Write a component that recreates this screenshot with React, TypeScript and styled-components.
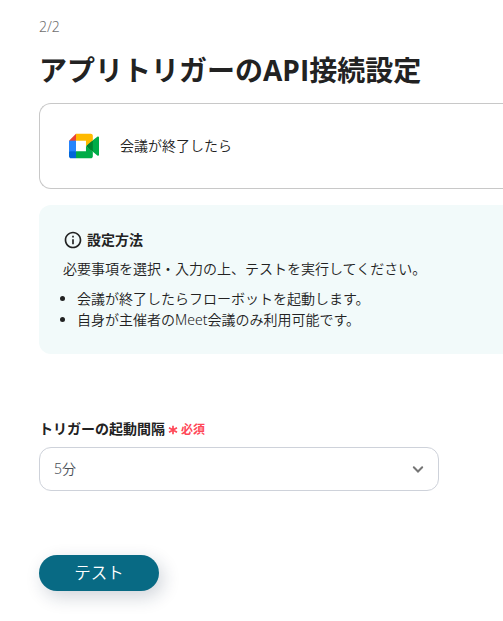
import { FC } from "react";

import styled, { createGlobalStyle } from "styled-components";

const notes = [
  "会議が終了したらフローボットを起動します。",
  "自身が主催者のMeet会議のみ利用可能です。",
];

const MeetLogo: FC = () => (
  <svg width="30" height="26" viewBox="0 0 87.5 72" aria-hidden="true">
    <path
      fill="#00832d"
      d="M49.5 36l8.53 9.75 11.47 7.33 2-17.02-2-16.64-11.69 6.44z"
    />
    <path
      fill="#0066da"
      d="M0 51.5V66c0 3.315 2.685 6 6 6h14.5l3-10.96-3-9.54-9.95-3z"
    />
    <path fill="#e94235" d="M20.5 0L0 20.5l10.55 3 9.95-3 2.95-9.41z" />
    <path fill="#2684fc" d="M20.5 20.5H0v31h20.5z" />
    <path
      fill="#00ac47"
      d="M82.6 8.68L69.5 19.42v33.66l13.16 10.79c1.97 1.54 4.85.135 4.85-2.37V11c0-2.535-2.945-3.925-4.91-2.32zM49.5 36v15.5h-29V72h43c3.315 0 6-2.685 6-6V53.08z"
    />
    <path
      fill="#ffba00"
      d="M63.5 0h-43v20.5h29V36l20-16.57V6c0-3.315-2.685-6-6-6z"
    />
  </svg>
);

const InfoIcon: FC = () => (
  <svg width="20" height="20" viewBox="0 0 24 24" aria-hidden="true">
    <path
      fill="#222222"
      d="M11 7h2v2h-2zm0 4h2v6h-2zm1-9C6.48 2 2 6.48 2 12s4.48 10 10 10 10-4.48 10-10S17.52 2 12 2zm0 18c-4.41 0-8-3.59-8-8s3.59-8 8-8 8 3.59 8 8-3.59 8-8 8z"
    />
  </svg>
);

const Asterisk: FC = () => (
  <svg width="10" height="10" viewBox="0 0 10 10" aria-hidden="true">
    <path
      stroke="#ff4757"
      strokeWidth="1.7"
      d="M5 .7v8.6M1 2.75l8 4.5M9 2.75l-8 4.5"
    />
  </svg>
);

const Chevron: FC = () => (
  <svg width="12" height="8" viewBox="0 0 12 8" aria-hidden="true">
    <path
      fill="none"
      stroke="#757575"
      strokeWidth="2"
      strokeLinecap="round"
      d="M1.8 2.3L6 6.5l4.2-4.2"
    />
  </svg>
);

const App: FC = () => {
  return (
    <>
      <GlobalStyle />
      <Page>
        <Step>2/2</Step>
        <Heading>アプリトリガーのAPI接続設定</Heading>

        <TriggerCard>
          <MeetLogo />
          <TriggerName>会議が終了したら</TriggerName>
        </TriggerCard>

        <Guide>
          <GuideTitle>
            <InfoIcon />
            設定方法
          </GuideTitle>
          <GuideText>
            必要事項を選択・入力の上、テストを実行してください。
          </GuideText>
          <GuideList>
            {notes.map((note) => (
              <li key={note}>{note}</li>
            ))}
          </GuideList>
        </Guide>

        <FieldLabel>
          トリガーの起動間隔
          <Required>
            <Asterisk />
            必須
          </Required>
        </FieldLabel>
        <Select type="button">
          <SelectValue>5分</SelectValue>
          <Chevron />
        </Select>

        <TestButton type="button">テスト</TestButton>
      </Page>
    </>
  );
};

const GlobalStyle = createGlobalStyle`
  * {
    box-sizing: border-box;
  }

  body {
    margin: 0;

    background: #ffffff;
    color: #222222;
    font-family: "Noto Sans", "Noto Sans CJK JP", sans-serif;
    font-size: 14px;
    font-weight: 350;
  }

  button {
    font-family: inherit;
    font-weight: inherit;
  }
`;

const Page = styled.main`
  min-height: 621px;
  padding: 17px 0 0 39px;
`;

const Step = styled.p`
  margin: 0;

  color: #707070;
  font-size: 14px;
  line-height: 20px;
`;

const Heading = styled.h1`
  margin: 13px 0 0;

  font-family: "Open Sans", "Noto Sans CJK JP", sans-serif;
  font-size: 28px;
  font-weight: 700;
  line-height: 40px;
  white-space: nowrap;
`;

const TriggerCard = styled.section`
  display: flex;
  align-items: center;
  gap: 21px;

  height: 86px;
  margin-top: 13px;
  padding-left: 29px;

  border: 1px solid #c8c8c8;
  border-right: 0;
  border-radius: 12px 0 0 12px;
`;

const TriggerName = styled.span`
  line-height: 20px;
`;

const Guide = styled.section`
  height: 149px;
  margin-top: 16px;
  padding: 24px;

  background: #f2fafa;
  border-radius: 12px 0 0 12px;
`;

const GuideTitle = styled.h2`
  display: flex;
  align-items: center;
  gap: 4px;

  margin: 0;

  font-size: 14px;
  font-weight: 700;
  line-height: 22px;
`;

const GuideText = styled.p`
  margin: 7px 0 0;

  line-height: 22px;
`;

const GuideList = styled.ul`
  margin: 8px 0 0;
  padding-left: 14px;

  line-height: 21px;
`;

const FieldLabel = styled.div`
  display: flex;
  align-items: center;
  gap: 3px;

  margin-top: 64px;

  font-weight: 700;
  line-height: 22px;
`;

const Required = styled.span`
  display: flex;
  align-items: center;
  gap: 3px;

  height: 22px;
  padding-top: 2px;

  color: #ff4757;
  font-size: 12px;
`;

const Select = styled.button`
  display: flex;
  justify-content: space-between;
  align-items: center;

  height: 44px;
  width: 400px;
  margin-top: 7px;
  padding: 0 14px;

  background: #ffffff;
  border: 1px solid #ced2da;
  border-radius: 12px;
  color: #495057;
  font-size: 14px;
`;

const SelectValue = styled.span`
  line-height: 20px;
`;

const TestButton = styled.button`
  display: block;

  height: 36px;
  width: 120px;
  margin-top: 64px;
  padding: 0;

  background: #086a84;
  border: 0;
  border-radius: 18px;
  box-shadow: 4px 6px 18px rgba(20, 40, 70, 0.2);
  color: #ffffff;
  font-size: 16.5px;
  line-height: 36px;
`;

export default App;
